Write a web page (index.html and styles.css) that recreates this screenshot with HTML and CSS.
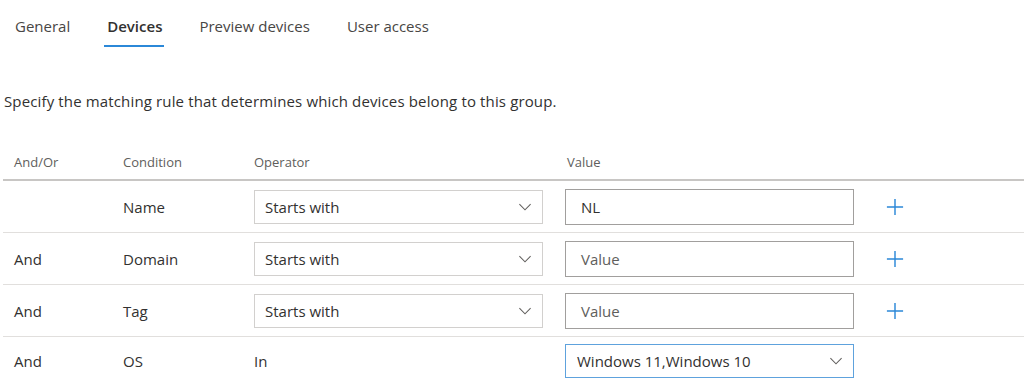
FILE: index.html
```html
<!DOCTYPE html>
<html lang="en">
	<head>
		<meta charset="UTF-8" />
		<meta name="viewport" content="width=device-width, initial-scale=1.0" />
		<title>Device group</title>
		<link rel="stylesheet" href="styles.css">
	</head>
	<body>
		<div class="page">
			<nav class="tabs">
				<a class="tab">General</a>
				<a class="tab active">Devices</a>
				<a class="tab">Preview devices</a>
				<a class="tab">User access</a>
			</nav>

			<p class="intro">Specify the matching rule that determines which devices belong to this group.</p>

			<div class="rules">
				<div class="row head">
					<div class="cell andor">And/Or</div>
					<div class="cell cond">Condition</div>
					<div class="cell oper">Operator</div>
					<div class="cell val">Value</div>
					<div class="cell add"></div>
				</div>

				<div class="row">
					<div class="cell andor"></div>
					<div class="cell cond">Name</div>
					<div class="cell oper">
						<div class="select">
							<span>Starts with</span>
							<svg class="chev" viewBox="0 0 16 10"><path d="M1 1.5 L8 8.5 L15 1.5" /></svg>
						</div>
					</div>
					<div class="cell val"><div class="input">NL</div></div>
					<div class="cell add">
						<svg class="plus" viewBox="0 0 20 20"><path d="M10 1 V19 M1 10 H19" /></svg>
					</div>
				</div>

				<div class="row">
					<div class="cell andor">And</div>
					<div class="cell cond">Domain</div>
					<div class="cell oper">
						<div class="select">
							<span>Starts with</span>
							<svg class="chev" viewBox="0 0 16 10"><path d="M1 1.5 L8 8.5 L15 1.5" /></svg>
						</div>
					</div>
					<div class="cell val"><div class="input placeholder">Value</div></div>
					<div class="cell add">
						<svg class="plus" viewBox="0 0 20 20"><path d="M10 1 V19 M1 10 H19" /></svg>
					</div>
				</div>

				<div class="row">
					<div class="cell andor">And</div>
					<div class="cell cond">Tag</div>
					<div class="cell oper">
						<div class="select">
							<span>Starts with</span>
							<svg class="chev" viewBox="0 0 16 10"><path d="M1 1.5 L8 8.5 L15 1.5" /></svg>
						</div>
					</div>
					<div class="cell val"><div class="input placeholder">Value</div></div>
					<div class="cell add">
						<svg class="plus" viewBox="0 0 20 20"><path d="M10 1 V19 M1 10 H19" /></svg>
					</div>
				</div>

				<div class="row last">
					<div class="cell andor">And</div>
					<div class="cell cond">OS</div>
					<div class="cell oper">In</div>
					<div class="cell val">
						<div class="select focus">
							<span>Windows 11,Windows 10</span>
							<svg class="chev" viewBox="0 0 16 10"><path d="M1 1.5 L8 8.5 L15 1.5" /></svg>
						</div>
					</div>
					<div class="cell add"></div>
				</div>
			</div>
		</div>
	</body>
</html>
```

FILE: styles.css
```css
* {
	margin: 0;
	padding: 0;
	box-sizing: border-box;
}
body {
	background: #fff;
	color: #323130;
	font-family: "Open Sans", "Noto Sans", sans-serif;
	overflow: hidden;
}
.page {
	padding-left: 3px;
}
.tabs {
	display: flex;
	height: 48px;
	padding-left: 12px;
	.tab {
		font-size: 15px;
		line-height: 20px;
		color: #484644;
		padding-top: 16px;
		margin-right: 37px;
		height: 47px;
		border-bottom: 2px solid transparent;
	}
	.tab.active {
		font-weight: 600;
		color: #323130;
		border-bottom-color: #2b88d8;
		padding-left: 3px;
		padding-right: 2px;
		margin-left: -3px;
		margin-right: 35px;
	}
}
.intro {
	font-size: 15px;
	line-height: 20px;
	margin-top: 43px;
	padding-left: 1px;
	letter-spacing: 0.14px;
	color: #323130;
}
.rules {
	margin-top: 42px;
	width: 1021px;
	.row {
		display: flex;
		align-items: center;
		height: 52px;
		border-bottom: 1px solid #e1dfdd;
		font-size: 15px;
	}
	.row.head {
		height: 28px;
		line-height: 18px;
		align-items: flex-start;
		border-bottom: 2px solid #c8c6c4;
		font-size: 13px;
		color: #605e5c;
	}
	.row.last {
		height: 48px;
		border-bottom: none;
	}
	.cell {
		flex: none;
	}
	.andor {
		width: 120px;
		padding-left: 11px;
	}
	.cond {
		width: 131px;
	}
	.oper {
		width: 311px;
	}
	.val {
		width: 289px;
	}
	.head .val {
		padding-left: 2px;
	}
	.add {
		display: flex;
		justify-content: center;
		width: 82px;
	}
	.select {
		display: flex;
		align-items: center;
		justify-content: space-between;
		width: 289px;
		height: 34px;
		border: 1px solid #d2d0ce;
		padding: 0 10px;
	}
	.select.focus {
		border-color: #5ea2dd;
		padding-left: 11px;
	}
	.chev {
		width: 14px;
		height: 8px;
		fill: none;
		stroke: #605e5c;
		stroke-width: 1.3;
	}
	.input {
		display: flex;
		align-items: center;
		width: 289px;
		height: 36px;
		border: 1px solid #a19f9d;
		padding-left: 15px;
	}
	.input.placeholder {
		color: #605e5c;
	}
	.plus {
		width: 18px;
		height: 18px;
		fill: none;
		stroke: #2b88d8;
		stroke-width: 1.6;
	}
}
```
